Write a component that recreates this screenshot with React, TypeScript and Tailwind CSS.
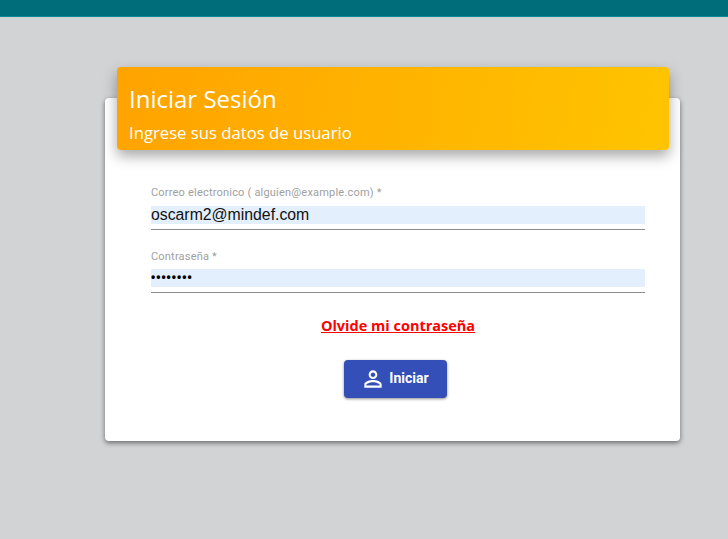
export default function App() {
  return (
    <div className="h-[539px] w-[728px] overflow-hidden bg-[#d2d3d5] font-['Roboto',sans-serif]">
      <div className="h-[17px] w-full border-b border-[#0a8a94] bg-[#006d7a]" />

      <div className="ml-[105px] mt-[81px] flex h-[343px] w-[575px] flex-col rounded-[4px] bg-white shadow-[0_2px_5px_rgba(0,0,0,0.5)]">
        <div className="-mt-[31px] ml-3 mr-[11px] h-[83px] rounded-[4px] bg-[linear-gradient(100deg,#ffa300,#ffc400)] px-3 pt-[16px] text-white shadow-[0_6px_14px_rgba(0,0,0,0.35)]">
          <h1 className="font-['Open_Sans',sans-serif] text-[24px] leading-[32px]">Iniciar Sesión</h1>
          <p className="mt-[7px] font-['Open_Sans',sans-serif] text-[16.7px] leading-[22px]">Ingrese sus datos de usuario</p>
        </div>

        <div className="pl-[46px] pr-[35px] pt-[36px]">
          <label className="block text-[11px] leading-[14px] tracking-[0.2px] text-[#a0a0a0]">
            Correo electronico ( alguien@example.com) *
          </label>
          <div className="mt-[6px] border-b border-[#8c8c8c] pb-[5px]">
            <div className="h-[18px] bg-[#e3effd] font-['Liberation_Sans',sans-serif] text-[15.8px] leading-[18px] text-[#111]">
              oscarm2@mindef.com
            </div>
          </div>

          <label className="mt-[20px] block text-[11px] leading-[14px] tracking-[0.2px] text-[#a0a0a0]">
            Contraseña *
          </label>
          <div className="mt-[5px] border-b border-[#8c8c8c] pb-[5px]">
            <div className="h-[18px] bg-[#e3effd] font-['Liberation_Sans',sans-serif] text-[12px] font-bold leading-[17px] tracking-[1px] text-black">
              ••••••••
            </div>
          </div>

          <div className="mt-[21px] text-center">
            <a className="font-['Open_Sans',sans-serif] text-[14.5px] font-bold leading-[20px] text-[#ff0000] underline">
              Olvide mi contraseña
            </a>
          </div>

          <div className="mt-[22px] flex justify-center pr-[5px]">
            <button className="flex h-[38px] w-[103px] items-center justify-center gap-[3px] rounded-[4px] bg-[#344fb8] pr-[2px] text-[14px] font-bold text-white shadow-[0_1px_3px_rgba(0,0,0,0.45)]">
              <svg viewBox="0 0 24 24" fill="currentColor" className="h-[26px] w-[26px]">
                <path d="M12 5.9c1.16 0 2.1.94 2.1 2.1s-.94 2.1-2.1 2.1S9.9 9.16 9.9 8s.94-2.1 2.1-2.1m0 9c2.97 0 6.1 1.46 6.1 2.1v1.1H5.9V17c0-.64 3.13-2.1 6.1-2.1M12 4C9.79 4 8 5.79 8 8s1.79 4 4 4 4-1.79 4-4-1.79-4-4-4zm0 9c-2.67 0-8 1.34-8 4v3h16v-3c0-2.66-5.33-4-8-4z" />
              </svg>
              <span className="-mt-[2px]">Iniciar</span>
            </button>
          </div>
        </div>
      </div>
    </div>
  );
}
